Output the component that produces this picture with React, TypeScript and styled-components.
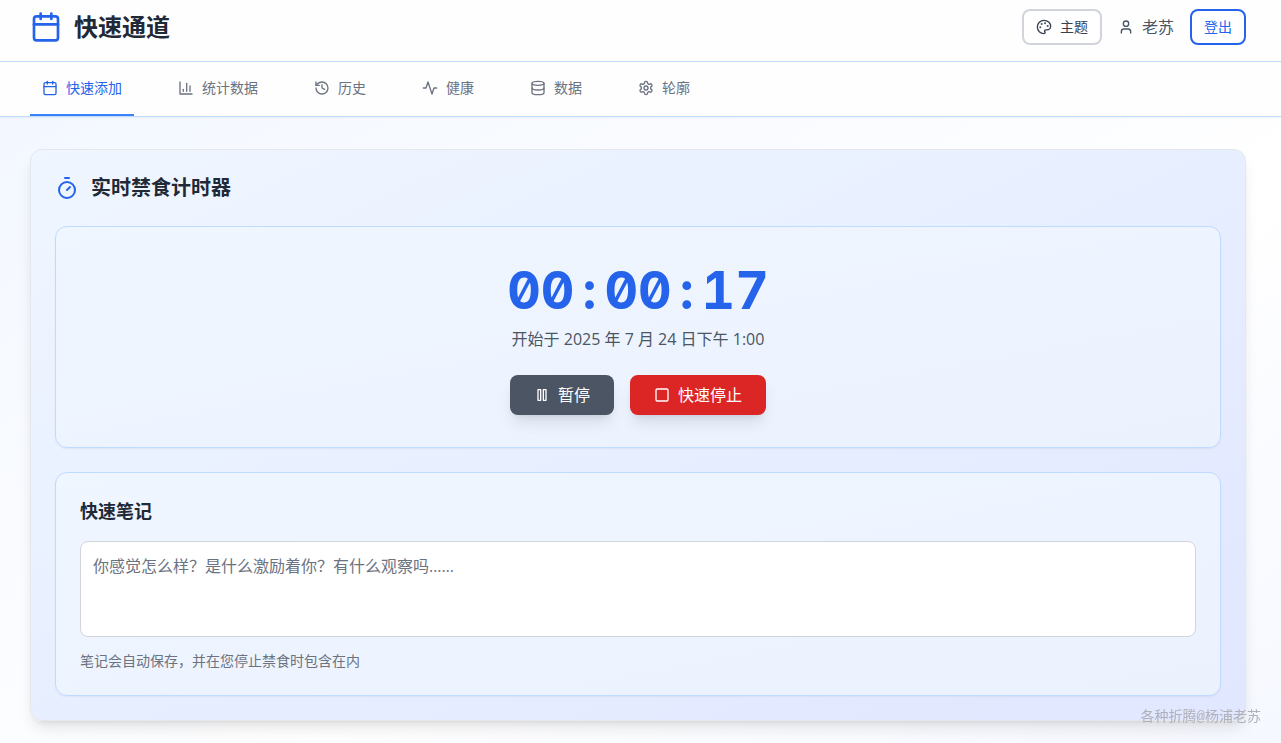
import React from "react";
import styled, { createGlobalStyle, css } from "styled-components";

const GlobalStyle = createGlobalStyle`
  *, *::before, *::after { box-sizing: border-box; }
  body {
    margin: 0;
    font-family: "Open Sans", "Noto Sans CJK SC", sans-serif;
    font-size: 16px;
    line-height: 24px;
    color: #1f2937;
  }
  h1, h2, h3, p { margin: 0; }
  button, textarea { font: inherit; }
`;

const Page = styled.div`
  min-height: 100vh;
  background: linear-gradient(to bottom right, #f1f6ff, #ffffff 62%, #eef2ff 130%);
`;

const Header = styled.header`
  display: flex;
  align-items: center;
  justify-content: space-between;
  padding: 9px 35px 16px 30px;
  background: #fefeff;
  border-bottom: 1px solid #bfdbfe;
`;

const Brand = styled.div`
  display: flex;
  align-items: center;
  gap: 12px;
  color: #2563eb;
`;

const BrandName = styled.h1`
  font-size: 24px;
  line-height: 32px;
  font-weight: 700;
  color: #1f2937;
`;

const Actions = styled.div`
  display: flex;
  align-items: center;
  gap: 16px;
`;

const OutlineButton = styled.button<{ $primary?: boolean }>`
  display: flex;
  align-items: center;
  gap: 8px;
  padding: 6px 12px;
  font-size: 14px;
  line-height: 20px;
  background: #ffffff;
  border: 2px solid ${(p) => (p.$primary ? "#2563eb" : "#d1d5db")};
  border-radius: 8px;
  color: ${(p) => (p.$primary ? "#2563eb" : "#374151")};
  cursor: pointer;
`;

const UserLabel = styled.div`
  display: flex;
  align-items: center;
  gap: 8px;
  color: #4b5563;
`;

const Nav = styled.nav`
  display: flex;
  gap: 32px;
  padding: 0 35px 0 30px;
  background: #fefeff;
  border-bottom: 1px solid #bfdbfe;
  box-shadow: 0 1px 2px rgba(0, 0, 0, 0.05);
`;

const Tab = styled.a<{ $active?: boolean }>`
  display: flex;
  align-items: center;
  gap: 8px;
  padding: 16px 12px;
  font-size: 14px;
  line-height: 20px;
  text-decoration: none;
  border-bottom: 2px solid transparent;
  color: #6b7280;
  ${(p) =>
    p.$active &&
    css`
      color: #2563eb;
      border-bottom-color: #3b82f6;
    `}
`;

const Main = styled.main`
  padding: 32px 35px 32px 30px;
`;

const Card = styled.section`
  display: flex;
  flex-direction: column;
  gap: 24px;
  padding: 24px;
  background: linear-gradient(to bottom right, #eff6ff, #e0e7ff);
  border: 1px solid #e5e7eb;
  border-radius: 12px;
  box-shadow: 0 10px 15px -3px rgba(0, 0, 0, 0.1), 0 4px 6px -4px rgba(0, 0, 0, 0.1);
`;

const CardHeading = styled.div`
  display: flex;
  align-items: center;
  gap: 12px;
  color: #2563eb;
`;

const CardTitle = styled.h2`
  font-size: 20px;
  line-height: 28px;
  font-weight: 700;
  color: #1f2937;
`;

const Panel = styled.div<{ $centered?: boolean }>`
  display: flex;
  flex-direction: column;
  align-items: ${(p) => (p.$centered ? "center" : "stretch")};
  padding: ${(p) => (p.$centered ? "32px" : "24px")};
  background: linear-gradient(to bottom right, #eff6ff, #ebf2fe);
  border: 1px solid #bfdbfe;
  border-radius: 12px;
  box-shadow: 0 1px 2px rgba(0, 0, 0, 0.05);
`;

const Clock = styled.div`
  display: flex;
  font-family: "Inter", sans-serif;
  font-feature-settings: "tnum", "zero";
  font-size: 52px;
  line-height: 64px;
  font-weight: 700;
  color: #2563eb;
`;

const ClockColon = styled.span`
  width: 30px;
  text-align: center;
`;

const Started = styled.p`
  margin-top: 4px;
  color: #4b5563;
`;

const ButtonRow = styled.div`
  display: flex;
  gap: 16px;
  margin-top: 24px;
`;

const SolidButton = styled.button<{ $danger?: boolean }>`
  display: flex;
  align-items: center;
  gap: 8px;
  padding: 8px 24px;
  border: 0;
  border-radius: 8px;
  line-height: 24px;
  color: #ffffff;
  background: ${(p) => (p.$danger ? "#dc2626" : "#4b5563")};
  box-shadow: 0 10px 15px -3px rgba(0, 0, 0, 0.1), 0 4px 6px -4px rgba(0, 0, 0, 0.1);
  cursor: pointer;
`;

const NotesLabel = styled.label`
  font-size: 18px;
  line-height: 28px;
  font-weight: 700;
  color: #1f2937;
`;

const NotesInput = styled.textarea`
  display: block;
  width: 100%;
  height: 96px;
  margin-top: 16px;
  padding: 12px;
  color: #1f2937;
  background: #ffffff;
  border: 1px solid #d1d5db;
  border-radius: 8px;
  resize: none;
  &::placeholder {
    color: #6b7280;
    opacity: 1;
  }
`;

const Hint = styled.p`
  margin-top: 14px;
  font-size: 14px;
  line-height: 20px;
  color: #6b7280;
`;

const Watermark = styled.div`
  position: fixed;
  right: 20px;
  bottom: 16px;
  font-family: "Liberation Mono", "Noto Sans CJK SC", monospace;
  font-size: 14px;
  line-height: 20px;
  color: #b0b1b8;
  pointer-events: none;
`;

function Icon({ size = 16, children }: { size?: number; children: React.ReactNode }) {
  return (
    <svg
      width={size}
      height={size}
      viewBox="0 0 24 24"
      fill="none"
      stroke="currentColor"
      strokeWidth={2}
      strokeLinecap="round"
      strokeLinejoin="round"
      aria-hidden="true"
    >
      {children}
    </svg>
  );
}

const calendar = (
  <>
    <path d="M8 2v4" />
    <path d="M16 2v4" />
    <rect x="3" y="4" width="18" height="18" rx="2" />
    <path d="M3 10h18" />
  </>
);

const chart = (
  <>
    <path d="M3 3v18h18" />
    <path d="M18 17V9" />
    <path d="M13 17V5" />
    <path d="M8 17v-3" />
  </>
);

const history = (
  <>
    <path d="M3 12a9 9 0 1 0 9-9 9.75 9.75 0 0 0-6.74 2.74L3 8" />
    <path d="M3 3v5h5" />
    <path d="M12 7v5l4 2" />
  </>
);

const activity = <path d="M22 12h-4l-3 9L9 3l-3 9H2" />;

const database = (
  <>
    <ellipse cx="12" cy="5" rx="9" ry="3" />
    <path d="M3 5v14a9 3 0 0 0 18 0V5" />
    <path d="M3 12a9 3 0 0 0 18 0" />
  </>
);

const settings = (
  <>
    <path d="M12.22 2h-.44a2 2 0 0 0-2 2v.18a2 2 0 0 1-1 1.73l-.43.25a2 2 0 0 1-2 0l-.15-.08a2 2 0 0 0-2.73.73l-.22.38a2 2 0 0 0 .73 2.73l.15.1a2 2 0 0 1 1 1.72v.51a2 2 0 0 1-1 1.74l-.15.09a2 2 0 0 0-.73 2.73l.22.38a2 2 0 0 0 2.73.73l.15-.08a2 2 0 0 1 2 0l.43.25a2 2 0 0 1 1 1.73V20a2 2 0 0 0 2 2h.44a2 2 0 0 0 2-2v-.18a2 2 0 0 1 1-1.73l.43-.25a2 2 0 0 1 2 0l.15.08a2 2 0 0 0 2.73-.73l.22-.39a2 2 0 0 0-.73-2.73l-.15-.08a2 2 0 0 1-1-1.74v-.5a2 2 0 0 1 1-1.74l.15-.09a2 2 0 0 0 .73-2.73l-.22-.38a2 2 0 0 0-2.73-.73l-.15.08a2 2 0 0 1-2 0l-.43-.25a2 2 0 0 1-1-1.73V4a2 2 0 0 0-2-2z" />
    <circle cx="12" cy="12" r="3" />
  </>
);

const palette = (
  <>
    <circle cx="13.5" cy="6.5" r=".5" fill="currentColor" />
    <circle cx="17.5" cy="10.5" r=".5" fill="currentColor" />
    <circle cx="8.5" cy="7.5" r=".5" fill="currentColor" />
    <circle cx="6.5" cy="12.5" r=".5" fill="currentColor" />
    <path d="M12 2C6.5 2 2 6.5 2 12s4.5 10 10 10c.926 0 1.648-.746 1.648-1.688 0-.437-.18-.835-.437-1.125-.29-.289-.438-.652-.438-1.125a1.64 1.64 0 0 1 1.668-1.668h1.996c3.051 0 5.555-2.503 5.555-5.554C21.965 6.012 17.461 2 12 2z" />
  </>
);

const user = (
  <>
    <path d="M19 21v-2a4 4 0 0 0-4-4H9a4 4 0 0 0-4 4v2" />
    <circle cx="12" cy="7" r="4" />
  </>
);

const timer = (
  <>
    <path d="M10 2h4" />
    <path d="M12 14l3-3" />
    <circle cx="12" cy="14" r="8" />
  </>
);

const pause = (
  <>
    <rect x="6" y="4" width="4" height="16" />
    <rect x="14" y="4" width="4" height="16" />
  </>
);

const stop = <rect x="3" y="3" width="18" height="18" rx="2" />;

const tabs = [
  { id: "add", label: "快速添加", icon: calendar },
  { id: "stats", label: "统计数据", icon: chart },
  { id: "history", label: "历史", icon: history },
  { id: "health", label: "健康", icon: activity },
  { id: "data", label: "数据", icon: database },
  { id: "profile", label: "轮廓", icon: settings },
];

export default function App() {
  return (
    <Page>
      <GlobalStyle />
      <Header>
        <Brand>
          <Icon size={32}>{calendar}</Icon>
          <BrandName>快速通道</BrandName>
        </Brand>
        <Actions>
          <OutlineButton type="button">
            <Icon>{palette}</Icon>
            主题
          </OutlineButton>
          <UserLabel>
            <Icon>{user}</Icon>
            <span>老苏</span>
          </UserLabel>
          <OutlineButton type="button" $primary>
            登出
          </OutlineButton>
        </Actions>
      </Header>
      <Nav>
        {tabs.map((tab, index) => (
          <Tab
            key={tab.id}
            href={`#${tab.id}`}
            $active={index === 0}
            aria-current={index === 0 ? "page" : undefined}
          >
            <Icon>{tab.icon}</Icon>
            {tab.label}
          </Tab>
        ))}
      </Nav>
      <Main>
        <Card>
          <CardHeading>
            <Icon size={24}>{timer}</Icon>
            <CardTitle>实时禁食计时器</CardTitle>
          </CardHeading>
          <Panel $centered>
            <Clock role="timer">
              <span>00</span>
              <ClockColon>:</ClockColon>
              <span>00</span>
              <ClockColon>:</ClockColon>
              <span>17</span>
            </Clock>
            <Started>开始于 2025 年 7 月 24 日下午 1:00</Started>
            <ButtonRow>
              <SolidButton type="button">
                <Icon>{pause}</Icon>
                暂停
              </SolidButton>
              <SolidButton type="button" $danger>
                <Icon>{stop}</Icon>
                快速停止
              </SolidButton>
            </ButtonRow>
          </Panel>
          <Panel>
            <NotesLabel htmlFor="notes">快速笔记</NotesLabel>
            <NotesInput id="notes" placeholder="你感觉怎么样？是什么激励着你？有什么观察吗……" />
            <Hint>笔记会自动保存，并在您停止禁食时包含在内</Hint>
          </Panel>
        </Card>
      </Main>
      <Watermark>各种折腾@杨浦老苏</Watermark>
    </Page>
  );
}
